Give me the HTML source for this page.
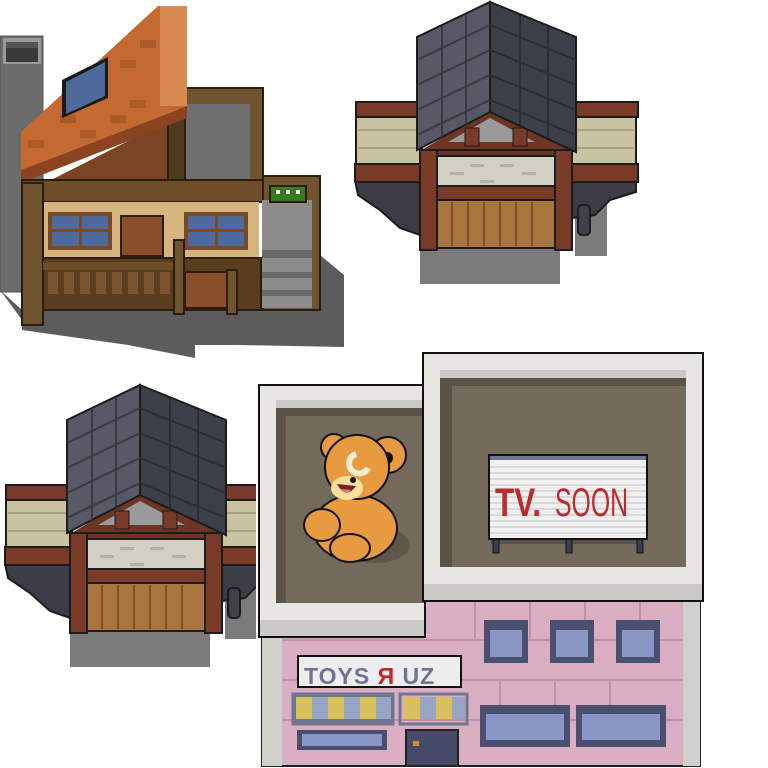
<!DOCTYPE html>
<html><head><meta charset="utf-8"><style>
html,body{margin:0;padding:0;background:#fff;width:768px;height:768px;overflow:hidden}
svg{display:block}
</style></head><body>
<svg width="768" height="768" viewBox="0 0 768 768" xmlns="http://www.w3.org/2000/svg">
<defs>
<g id="gb">
  <rect x="420" y="248" width="140" height="36" fill="#7b7b7b"/>
  <rect x="575" y="200" width="32" height="56" fill="#7b7b7b"/>
  <polygon points="355,180 420,180 420,235 400,228 380,210 358,195" fill="#3a3d46" stroke="#1c1c1f" stroke-width="2"/>
  <polygon points="572,180 636,180 636,192 610,200 595,215 572,218" fill="#3a3d46" stroke="#1c1c1f" stroke-width="2"/>
  <rect x="578" y="205" width="12" height="30" rx="4" fill="#3f4148" stroke="#1c1c1f" stroke-width="2"/>
  <rect x="356" y="112" width="66" height="54" fill="#c9c3a2" stroke="#1c1c1f" stroke-width="2"/>
  <rect x="572" y="112" width="64" height="54" fill="#c9c3a2" stroke="#1c1c1f" stroke-width="2"/>
  <g stroke="#a8a282" stroke-width="2"><line x1="358" y1="130" x2="420" y2="130"/><line x1="358" y1="148" x2="420" y2="148"/><line x1="574" y1="130" x2="634" y2="130"/><line x1="574" y1="148" x2="634" y2="148"/></g>
  <rect x="356" y="102" width="68" height="15" fill="#7a3a28" stroke="#1c1c1f" stroke-width="2"/>
  <rect x="570" y="102" width="68" height="15" fill="#7a3a28" stroke="#1c1c1f" stroke-width="2"/>
  <rect x="355" y="164" width="70" height="18" fill="#7a3a28" stroke="#1c1c1f" stroke-width="2"/>
  <rect x="568" y="164" width="70" height="18" fill="#7a3a28" stroke="#1c1c1f" stroke-width="2"/>
  <polygon points="418,152 490,110 575,152" fill="#6e3424"/>
  <polygon points="448,142 490,118 535,142" fill="#9a9a9a"/>
  <rect x="465" y="128" width="14" height="18" fill="#7a3a28" stroke="#1c1c1f" stroke-width="1"/>
  <rect x="513" y="128" width="14" height="18" fill="#7a3a28" stroke="#1c1c1f" stroke-width="1"/>
  <rect x="420" y="150" width="152" height="14" fill="#6e3424" stroke="#1c1c1f" stroke-width="2"/>
  <rect x="437" y="156" width="118" height="30" fill="#d2d0c4" stroke="#1c1c1f" stroke-width="2"/>
  <g fill="#b4b2a4"><rect x="470" y="164" width="14" height="3"/><rect x="500" y="164" width="14" height="3"/><rect x="450" y="172" width="14" height="3"/><rect x="522" y="172" width="14" height="3"/><rect x="480" y="180" width="14" height="3"/></g>
  <rect x="420" y="186" width="152" height="14" fill="#7a3a28" stroke="#1c1c1f" stroke-width="2"/>
  <rect x="437" y="200" width="118" height="48" fill="#a87440" stroke="#1c1c1f" stroke-width="2"/>
  <g stroke="#7e4e28" stroke-width="2">
    <line x1="452" y1="202" x2="452" y2="246"/><line x1="468" y1="202" x2="468" y2="246"/><line x1="484" y1="202" x2="484" y2="246"/><line x1="500" y1="202" x2="500" y2="246"/><line x1="516" y1="202" x2="516" y2="246"/><line x1="532" y1="202" x2="532" y2="246"/>
  </g>
  <rect x="420" y="150" width="17" height="100" fill="#7a3a28" stroke="#1c1c1f" stroke-width="2"/>
  <rect x="555" y="150" width="17" height="100" fill="#7a3a28" stroke="#1c1c1f" stroke-width="2"/>
  <polygon points="417,37 490,2 490,112 417,150" fill="#575a66" stroke="#1c1c1f" stroke-width="2"/>
  <polygon points="490,2 576,37 576,152 490,112" fill="#3b4048" stroke="#1c1c1f" stroke-width="2"/>
  <g stroke="#33353d" stroke-width="2" opacity=".8">
    <line x1="417" y1="60" x2="490" y2="25"/><line x1="417" y1="85" x2="490" y2="50"/><line x1="417" y1="110" x2="490" y2="75"/><line x1="417" y1="135" x2="490" y2="100"/>
    <line x1="442" y1="25" x2="442" y2="138"/><line x1="466" y1="14" x2="466" y2="125"/>
  </g>
  <g stroke="#262a30" stroke-width="2" opacity=".8">
    <line x1="490" y1="25" x2="576" y2="60"/><line x1="490" y1="50" x2="576" y2="85"/><line x1="490" y1="75" x2="576" y2="110"/><line x1="490" y1="100" x2="576" y2="135"/>
    <line x1="520" y1="15" x2="520" y2="125"/><line x1="548" y1="26" x2="548" y2="138"/>
  </g>
</g>
<clipPath id="c2"><rect x="0" y="370" width="256" height="320"/></clipPath>
</defs>

<polygon points="0,290 22,320 22,330 128,345 195,358 195,345 238,345 344,347 344,275 320,255 320,310 22,310" fill="#5c5c5c"/>
<rect x="0" y="36" width="43" height="256" fill="#6b6b6b" stroke="#555" stroke-width="1"/>
<rect x="3" y="38" width="38" height="26" fill="#9a9a9a"/>
<rect x="6" y="42" width="32" height="20" fill="#3a3a3a"/>
<rect x="6" y="42" width="32" height="6" fill="#555"/>
<rect x="180" y="88" width="83" height="100" fill="#6e5530" stroke="#2a1e10" stroke-width="2"/>
<rect x="186" y="104" width="64" height="76" fill="#6f6f6f"/>
<polygon points="45,183 170,120 170,183" fill="#7a4523"/>
<rect x="168" y="118" width="17" height="68" fill="#4f3a1e" stroke="#2a1e10" stroke-width="2"/>
<polygon points="21,132 158,6 187,6 187,106 21,170" fill="#c46a30"/>
<g fill="#a85a28"><rect x="28" y="140" width="16" height="8"/><rect x="60" y="115" width="16" height="8"/><rect x="80" y="130" width="16" height="8"/><rect x="120" y="60" width="16" height="8"/><rect x="130" y="100" width="16" height="8"/><rect x="140" y="40" width="16" height="8"/><rect x="110" y="115" width="16" height="8"/></g>
<rect x="160" y="6" width="27" height="100" fill="#d98a52"/>
<polygon points="21,170 187,106 187,118 21,183" fill="#8c4420"/>
<polygon points="62,80 108,57 108,98 62,118" fill="#1a1a1a"/>
<polygon points="66,82 105,62 105,96 66,114" fill="#4e6a9a"/>
<rect x="22" y="180" width="241" height="22" fill="#6e4e28" stroke="#2a1e10" stroke-width="2"/>
<rect x="43" y="202" width="216" height="56" fill="#d6b47e"/>
<rect x="48" y="212" width="64" height="38" fill="#7a4a28"/><rect x="52" y="216" width="56" height="30" fill="#4e6a9a"/><rect x="52" y="229" width="56" height="3" fill="#7a4a28"/><rect x="79" y="216" width="3" height="30" fill="#7a4a28"/>
<rect x="184" y="212" width="64" height="38" fill="#7a4a28"/><rect x="188" y="216" width="56" height="30" fill="#4e6a9a"/><rect x="188" y="229" width="56" height="3" fill="#7a4a28"/><rect x="215" y="216" width="3" height="30" fill="#7a4a28"/>
<rect x="121" y="216" width="42" height="40" fill="#8a4e28" stroke="#2a1e10" stroke-width="2"/>
<rect x="22" y="183" width="21" height="142" fill="#6e5530" stroke="#2a1e10" stroke-width="2"/>
<rect x="43" y="258" width="218" height="52" fill="#5a3d1e" stroke="#2a1e10" stroke-width="2"/>
<rect x="43" y="262" width="136" height="8" fill="#6e4e28"/>
<g fill="#7a5530"><rect x="48" y="272" width="10" height="22"/><rect x="64" y="272" width="10" height="22"/><rect x="80" y="272" width="10" height="22"/><rect x="96" y="272" width="10" height="22"/><rect x="112" y="272" width="10" height="22"/><rect x="128" y="272" width="10" height="22"/><rect x="144" y="272" width="10" height="22"/><rect x="160" y="272" width="10" height="22"/></g>
<rect x="185" y="272" width="42" height="36" fill="#8a4e28" stroke="#2a1e10" stroke-width="2"/>
<rect x="174" y="240" width="10" height="74" fill="#6e5530" stroke="#2a1e10" stroke-width="2"/>
<rect x="227" y="270" width="10" height="44" fill="#6e5530" stroke="#2a1e10" stroke-width="2"/>
<rect x="263" y="176" width="57" height="134" fill="#6e5530" stroke="#2a1e10" stroke-width="2"/>
<rect x="262" y="200" width="50" height="108" fill="#8c8c8c"/>
<rect x="262" y="250" width="50" height="8" fill="#6a6a6a"/><rect x="262" y="272" width="50" height="6" fill="#6a6a6a"/><rect x="262" y="290" width="50" height="6" fill="#6a6a6a"/>
<rect x="270" y="186" width="36" height="16" fill="#3a7a20" stroke="#2a1e10" stroke-width="2"/>
<rect x="276" y="190" width="4" height="4" fill="#fff"/><rect x="286" y="190" width="4" height="4" fill="#fff"/><rect x="296" y="190" width="4" height="4" fill="#fff"/>

<use href="#gb"/>
<g clip-path="url(#c2)"><use href="#gb" transform="translate(-350,383)"/></g>

<rect x="262" y="598" width="438" height="168" fill="#d8aec0" stroke="#222" stroke-width="2"/>
<g stroke="#c48ea4" stroke-width="2">
  <line x1="282" y1="640" x2="683" y2="640"/><line x1="282" y1="680" x2="683" y2="680"/><line x1="282" y1="720" x2="683" y2="720"/>
  <line x1="475" y1="600" x2="475" y2="640"/><line x1="530" y1="600" x2="530" y2="640"/><line x1="585" y1="600" x2="585" y2="640"/><line x1="640" y1="600" x2="640" y2="640"/>
  <line x1="500" y1="680" x2="500" y2="720"/><line x1="555" y1="680" x2="555" y2="720"/><line x1="610" y1="680" x2="610" y2="720"/>
</g>
<rect x="262" y="598" width="20" height="168" fill="#d0d0cc"/>
<rect x="683" y="598" width="17" height="168" fill="#d0d0cc"/>
<g fill="#4a4f70"><rect x="484" y="620" width="44" height="43"/><rect x="550" y="620" width="44" height="43"/><rect x="616" y="620" width="44" height="43"/><rect x="480" y="705" width="90" height="42"/><rect x="576" y="705" width="90" height="42"/></g>
<g fill="#8a96c4"><rect x="490" y="630" width="32" height="27"/><rect x="556" y="630" width="32" height="27"/><rect x="622" y="630" width="32" height="27"/><rect x="486" y="714" width="78" height="26"/><rect x="582" y="714" width="78" height="26"/></g>
<rect x="298" y="656" width="163" height="31" fill="#ededed" stroke="#111" stroke-width="2"/>
<text x="304" y="684" font-family="Liberation Sans, sans-serif" font-weight="bold" font-size="23" fill="#6b7490" letter-spacing="1">TOYS <tspan fill="#c0282c">Я</tspan> UZ</text>
<g>
  <rect x="297" y="730" width="90" height="20" fill="#4a4f70"/><rect x="302" y="734" width="80" height="12" fill="#8a96c4"/>
  <rect x="406" y="730" width="52" height="36" fill="#454a68" stroke="#222" stroke-width="2"/>
  <rect x="413" y="741" width="6" height="5" fill="#e08a2a"/>
  <rect x="293" y="694" width="100" height="30" fill="#6e7690"/>
  <g fill="#d8c05a"><rect x="296" y="697" width="16" height="22"/><rect x="328" y="697" width="16" height="22"/><rect x="360" y="697" width="16" height="22"/><rect x="404" y="697" width="16" height="22"/><rect x="436" y="697" width="16" height="22"/></g>
  <g fill="#9aa4c4"><rect x="312" y="697" width="16" height="22"/><rect x="344" y="697" width="16" height="22"/><rect x="376" y="697" width="15" height="22"/><rect x="420" y="697" width="16" height="22"/><rect x="452" y="697" width="13" height="22"/></g>
  <rect x="400" y="694" width="67" height="30" fill="none" stroke="#6e7690" stroke-width="3"/>
  <rect x="293" y="694" width="100" height="30" fill="none" stroke="#6e7690" stroke-width="3"/>
</g>
<rect x="259" y="385" width="166" height="252" fill="#e8e6e3" stroke="#111" stroke-width="2"/>
<rect x="276" y="400" width="148" height="203" fill="#736a5c"/>
<rect x="276" y="400" width="148" height="8" fill="#cccac6"/>
<rect x="276" y="408" width="148" height="8" fill="#5a5246"/>
<rect x="276" y="408" width="10" height="195" fill="#5a5246"/>
<rect x="260" y="620" width="164" height="16" fill="#cccac6"/>
<rect x="423" y="353" width="280" height="248" fill="#e8e6e3" stroke="#111" stroke-width="2"/>
<rect x="440" y="370" width="246" height="197" fill="#736a5c"/>
<rect x="440" y="370" width="246" height="8" fill="#cccac6"/>
<rect x="440" y="378" width="246" height="8" fill="#5a5246"/>
<rect x="440" y="378" width="12" height="189" fill="#5a5246"/>
<rect x="424" y="584" width="278" height="16" fill="#cccac6"/>
<rect x="491" y="530" width="152" height="14" fill="#5a5246"/>
<rect x="493" y="539" width="6" height="14" fill="#3a3e56" stroke="#111" stroke-width="1"/>
<rect x="566" y="539" width="6" height="14" fill="#3a3e56" stroke="#111" stroke-width="1"/>
<rect x="637" y="539" width="6" height="14" fill="#3a3e56" stroke="#111" stroke-width="1"/>
<rect x="489" y="455" width="158" height="84" fill="#f0f0f0" stroke="#111" stroke-width="2"/>
<rect x="490" y="456" width="156" height="4" fill="#6b7490"/>
<g fill="#d8d8d8"><rect x="490" y="466" width="156" height="2"/><rect x="490" y="472" width="156" height="2"/><rect x="490" y="478" width="156" height="2"/><rect x="490" y="484" width="156" height="2"/><rect x="490" y="490" width="156" height="2"/><rect x="490" y="496" width="156" height="2"/><rect x="490" y="502" width="156" height="2"/><rect x="490" y="508" width="156" height="2"/><rect x="490" y="514" width="156" height="2"/><rect x="490" y="520" width="156" height="2"/><rect x="490" y="526" width="156" height="2"/><rect x="490" y="532" width="156" height="2"/></g>
<text x="495" y="516" font-family="Liberation Sans, sans-serif" font-weight="bold" font-size="40" fill="#c0282c" textLength="46" lengthAdjust="spacingAndGlyphs">TV.</text>
<text x="555" y="516" font-family="Liberation Sans, sans-serif" font-size="40" fill="#c0282c" textLength="73" lengthAdjust="spacingAndGlyphs">SOON</text>
<ellipse cx="375" cy="545" rx="35" ry="18" fill="#5e5648"/>
<ellipse cx="355" cy="528" rx="42" ry="33" fill="#e89a40" stroke="#111" stroke-width="2"/>
<ellipse cx="322" cy="525" rx="18" ry="16" fill="#e89a40" stroke="#111" stroke-width="2"/>
<ellipse cx="350" cy="548" rx="20" ry="14" fill="#e89a40" stroke="#111" stroke-width="2"/>
<circle cx="388" cy="455" r="18" fill="#e89a40" stroke="#111" stroke-width="2"/>
<circle cx="387" cy="458" r="6" fill="#111"/>
<circle cx="334" cy="447" r="13" fill="#e89a40" stroke="#111" stroke-width="2"/>
<circle cx="357" cy="467" r="32" fill="#e89a40" stroke="#111" stroke-width="2"/>
<ellipse cx="347" cy="488" rx="16" ry="12" fill="#f8e09a"/>
<path d="M337 484 Q346 500 356 486 Z" fill="#7a2020"/>
<path d="M341 489 Q346 496 351 490 Z" fill="#e07878"/>
<circle cx="353" cy="480" r="3" fill="#111"/>
<path d="M356 454 A10 10 0 1 0 368 468" fill="none" stroke="#f4ecd4" stroke-width="6"/>
</svg>
</body></html>
